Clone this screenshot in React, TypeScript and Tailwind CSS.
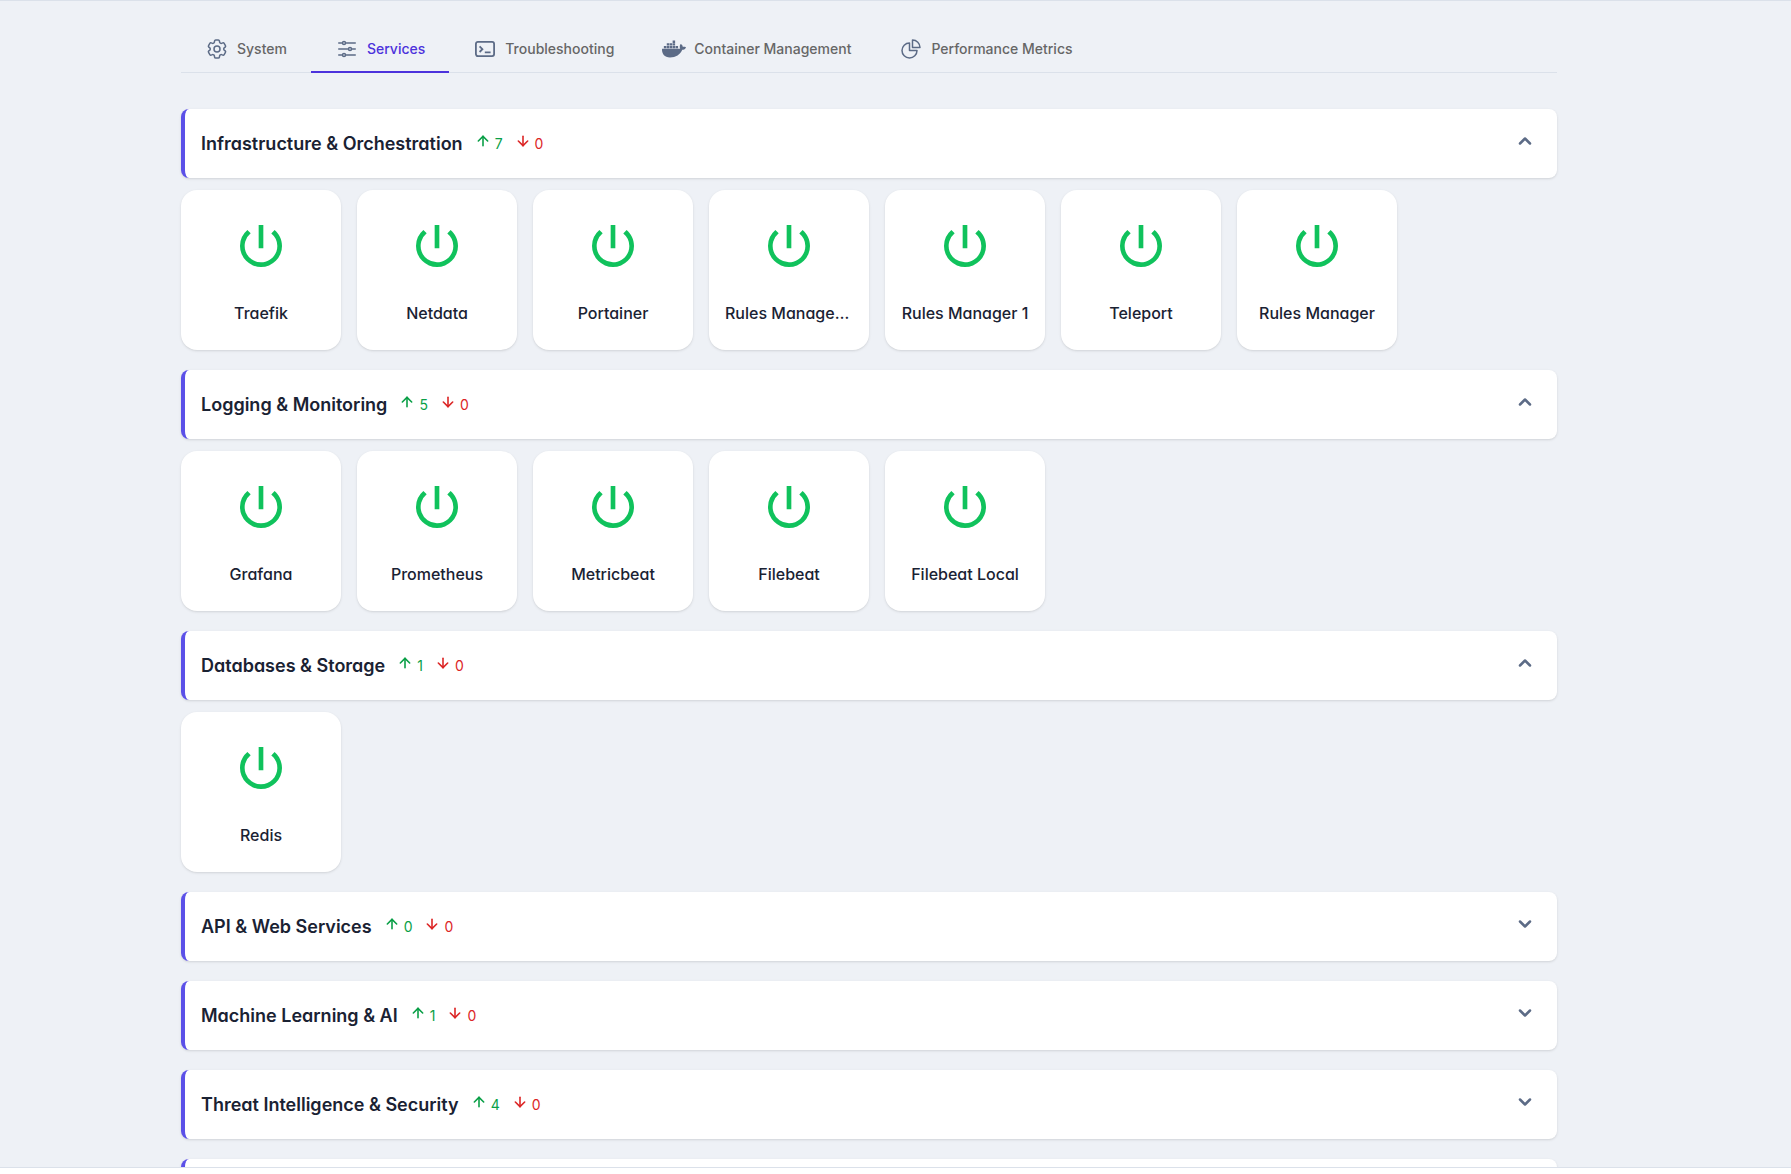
import { ComponentType, useState } from 'react'
import { FaDocker } from 'react-icons/fa'
import { HiOutlineAdjustmentsHorizontal, HiOutlineChartPie, HiOutlineCog6Tooth } from 'react-icons/hi2'
import { MdPowerSettingsNew } from 'react-icons/md'
import { ArrowDown, ArrowUp, ChevronDown, ChevronUp } from 'lucide-react'

interface IconProps {
  className?: string
}

interface Group {
  name: string
  up: number
  down: number
  open: boolean
  services: string[]
}

interface TabProps {
  label: string
  icon: ComponentType<IconProps>
  active: boolean
  onSelect(): void
}

const TerminalIcon = ({ className }: IconProps) => {
  return (
    <svg className={className} viewBox="0 0 24 24" fill="none" stroke="currentColor" strokeWidth="1.8">
      <rect x="2.9" y="4.9" width="18.2" height="14.2" rx="2" />
      <path d="M6.6 9.4 9.4 12.2 6.6 15M11.8 15.3H17.6" />
    </svg>
  )
}

const tabs = [
  { label: 'System', icon: HiOutlineCog6Tooth },
  { label: 'Services', icon: HiOutlineAdjustmentsHorizontal },
  { label: 'Troubleshooting', icon: TerminalIcon },
  { label: 'Container Management', icon: FaDocker },
  { label: 'Performance Metrics', icon: HiOutlineChartPie },
]

const groups: Group[] = [
  {
    name: 'Infrastructure & Orchestration',
    up: 7,
    down: 0,
    open: true,
    services: ['Traefik', 'Netdata', 'Portainer', 'Rules Manager 2', 'Rules Manager 1', 'Teleport', 'Rules Manager'],
  },
  {
    name: 'Logging & Monitoring',
    up: 5,
    down: 0,
    open: true,
    services: ['Grafana', 'Prometheus', 'Metricbeat', 'Filebeat', 'Filebeat Local'],
  },
  { name: 'Databases & Storage', up: 1, down: 0, open: true, services: ['Redis'] },
  { name: 'API & Web Services', up: 0, down: 0, open: false, services: [] },
  { name: 'Machine Learning & AI', up: 1, down: 0, open: false, services: [] },
  { name: 'Threat Intelligence & Security', up: 4, down: 0, open: false, services: [] },
  { name: '', up: 0, down: 0, open: false, services: [] },
]

const Tab = ({ label, icon: Icon, active, onSelect }: TabProps) => {
  return (
    <button
      className={`-mb-px flex items-center gap-2 border-b-2 px-6 pt-3 pb-2.5 text-sm font-medium ${
        active ? 'border-[#4c32dc] text-[#4c32dc]' : 'border-transparent text-[#666666]'
      }`}
      role="tab"
      aria-selected={active}
      onClick={onSelect}
    >
      <Icon className="size-6 text-[#5c6b86]" />
      {label}
    </button>
  )
}

const ServiceCard = ({ name }: { name: string }) => {
  return (
    <button className="flex size-40 flex-col items-center rounded-2xl bg-white px-4 pt-7 shadow-sm">
      <MdPowerSettingsNew className="size-14 text-[#10c25c]" />
      <span className="mt-[27px] w-full truncate text-center font-medium text-[#1a2233]">{name}</span>
    </button>
  )
}

const ServiceGroup = ({ group }: { group: Group }) => {
  const [open, setOpen] = useState(group.open)
  const Chevron = open ? ChevronUp : ChevronDown

  return (
    <section className="mb-5 [font-feature-settings:'cv11']">
      <button
        className="flex min-h-[69px] w-full items-center rounded-lg border-l-4 border-[#5b50e8] bg-white pr-[22px] pl-4 text-left shadow-sm"
        aria-expanded={open}
        onClick={() => setOpen(!open)}
      >
        {group.name && (
          <>
            <span className="text-lg font-semibold text-[#1a2233]">{group.name}</span>
            <span className="ml-3 flex items-center gap-1 text-sm text-[#0a9f47]">
              <ArrowUp className="mb-1.5 size-4" strokeWidth={2.4} />
              {group.up}
            </span>
            <span className="ml-3 flex items-center gap-1 text-sm text-[#dc2626]">
              <ArrowDown className="mb-1.5 size-4" strokeWidth={2.4} />
              {group.down}
            </span>
            <Chevron className="mb-1.5 ml-auto size-5 text-[#5c6b86]" strokeWidth={3} />
          </>
        )}
      </button>
      {open && (
        <div className="mt-3 flex flex-wrap gap-4">
          {group.services.map(service => (
            <ServiceCard key={service} name={service} />
          ))}
        </div>
      )}
    </section>
  )
}

export default function App() {
  const [activeTab, setActiveTab] = useState('Services')

  return (
    <div className="flex h-screen flex-col bg-white font-[Inter,sans-serif] [text-rendering:geometricPrecision]">
      <main className="flex-1 overflow-hidden border-y border-[#dbe1ea] bg-[#eef1f6] pr-[53px]">
        <div className="mx-auto max-w-[1440px] px-8 pt-6">
          <div className="mb-9 flex border-b border-[#dbe1ea]" role="tablist">
            {tabs.map(tab => (
              <Tab
                key={tab.label}
                label={tab.label}
                icon={tab.icon}
                active={activeTab === tab.label}
                onSelect={() => setActiveTab(tab.label)}
              />
            ))}
          </div>
          {groups.map(group => (
            <ServiceGroup key={group.name} group={group} />
          ))}
        </div>
      </main>
      <footer className="h-1.5 shrink-0" />
    </div>
  )
}
